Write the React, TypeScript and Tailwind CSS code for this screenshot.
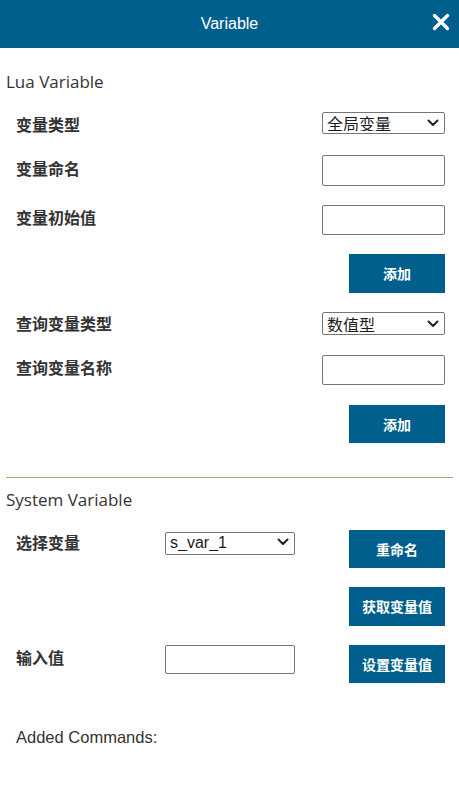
import React from "react";

const CJK = '"Noto Sans CJK SC", "Noto Sans", sans-serif';

function Chevron() {
  return (
    <svg width="12" height="8" viewBox="0 0 12 8" className="absolute right-[6px] top-1/2 -translate-y-1/2 pointer-events-none">
      <path d="M1.5 1.5 L6 6 L10.5 1.5" fill="none" stroke="#222" strokeWidth="2" strokeLinecap="round" strokeLinejoin="round" />
    </svg>
  );
}

function Select({ value, w, h, font }: { value: string; w: string; h: string; font: string }) {
  return (
    <div className={`relative ${w} ${h} shrink-0`}>
      <select
        defaultValue={value}
        className="appearance-none w-full h-full border border-[#767676] rounded-[2px] bg-white pl-[4px] text-[16px] text-[#1a1a1a] leading-none outline-none"
        style={{ fontFamily: font }}
      >
        <option>{value}</option>
      </select>
      <Chevron />
    </div>
  );
}

function Input({ w, h }: { w: string; h: string }) {
  return (
    <input
      type="text"
      className={`${w} ${h} shrink-0 border border-[#767676] rounded-[2px] bg-white outline-none`}
    />
  );
}

function Btn({ children, h }: { children: React.ReactNode; h: string }) {
  return (
    <button
      className={`w-[96px] ${h} shrink-0 bg-[#005f8c] text-white text-[14px] font-bold flex items-center justify-center`}
      style={{ fontFamily: CJK }}
    >
      {children}
    </button>
  );
}

function Label({ children }: { children: React.ReactNode }) {
  return (
    <div className="text-[16px] leading-6 font-bold text-[#333]" style={{ fontFamily: CJK }}>
      {children}
    </div>
  );
}

export default function App() {
  return (
    <div className="w-[459px] min-h-[808px] bg-white">
      <div className="h-12 bg-[#005f8c] relative flex items-center justify-center">
        <span className="text-white text-[16px]" style={{ fontFamily: '"Liberation Sans", Arial, sans-serif' }}>
          Variable
        </span>
        <svg width="18" height="18" viewBox="0 0 18 18" className="absolute left-[432px] top-[13px]">
          <path d="M2.5 2.5 L15.5 15.5 M15.5 2.5 L2.5 15.5" stroke="#fff" strokeWidth="3.4" strokeLinecap="round" />
        </svg>
      </div>

      <div className="pl-[6px] pr-[4px]">
        <div className="mt-[22px] text-[17px] leading-6 text-[#333]" style={{ fontFamily: '"Open Sans", sans-serif' }}>
          Lua Variable
        </div>
      </div>

      <div className="pl-[16px] pr-[14px]">
        <div className="mt-[18px] h-[22px] flex justify-between items-start">
          <Label>变量类型</Label>
          <Select value="全局变量" w="w-[123px]" h="h-[22px]" font={CJK} />
        </div>
        <div className="mt-[21px] flex justify-between items-start">
          <div className="pt-[1px]"><Label>变量命名</Label></div>
          <Input w="w-[123px]" h="h-[31px]" />
        </div>
        <div className="mt-[19px] flex justify-between items-start">
          <Label>变量初始值</Label>
          <Input w="w-[123px]" h="h-[30px]" />
        </div>
        <div className="mt-[19px] flex justify-end">
          <Btn h="h-[39px]">添加</Btn>
        </div>
        <div className="mt-[19px] h-[23px] flex justify-between items-start">
          <div className="-mt-[1px]"><Label>查询变量类型</Label></div>
          <Select value="数值型" w="w-[123px]" h="h-[23px]" font={CJK} />
        </div>
        <div className="mt-[20px] flex justify-between items-start">
          <Label>查询变量名称</Label>
          <Input w="w-[123px]" h="h-[30px]" />
        </div>
        <div className="mt-[20px] flex justify-end">
          <Btn h="h-[38px]">添加</Btn>
        </div>
      </div>

      <div className="mt-[34px] mx-[6px] h-px bg-[#93b55a]" />

      <div className="pl-[6px]">
        <div className="mt-[10px] text-[17px] leading-6 text-[#333]" style={{ fontFamily: '"Open Sans", sans-serif' }}>
          System Variable
        </div>
      </div>

      <div className="pl-[16px] pr-[14px]">
        <div className="mt-[18px] flex items-start">
          <div className="w-[149px]"><Label>选择变量</Label></div>
          <Select value="s_var_1" w="w-[130px]" h="h-[23px]" font='"Liberation Sans", Arial, sans-serif' />
          <div className="flex-1" />
          <Btn h="h-[38px]">重命名</Btn>
        </div>
        <div className="mt-[19px] flex justify-end">
          <Btn h="h-[39px]">获取变量值</Btn>
        </div>
        <div className="mt-[19px] flex items-start">
          <div className="w-[149px]"><Label>输入值</Label></div>
          <Input w="w-[130px]" h="h-[29px]" />
          <div className="flex-1" />
          <Btn h="h-[38px]">设置变量值</Btn>
        </div>
        <div
          className="mt-[42px] text-[16.5px] leading-6 text-[#333]"
          style={{ fontFamily: '"Liberation Sans", Arial, sans-serif' }}
        >
          Added Commands:
        </div>
      </div>
    </div>
  );
}
